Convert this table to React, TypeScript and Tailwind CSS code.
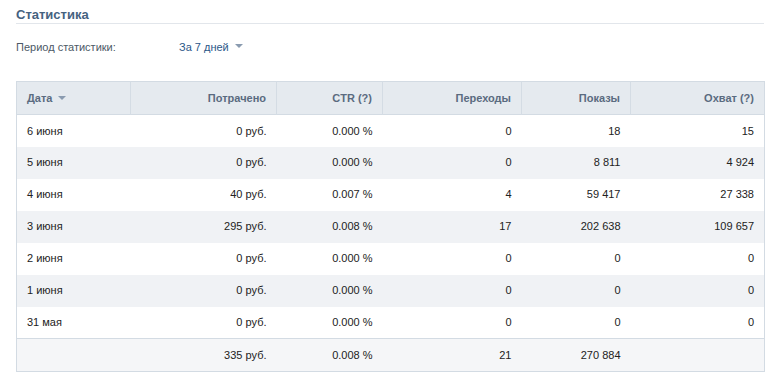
import React from "react";

const rows = [
  ["6 июня", "0 руб.", "0.000 %", "0", "18", "15"],
  ["5 июня", "0 руб.", "0.000 %", "0", "8 811", "4 924"],
  ["4 июня", "40 руб.", "0.007 %", "4", "59 417", "27 338"],
  ["3 июня", "295 руб.", "0.008 %", "17", "202 638", "109 657"],
  ["2 июня", "0 руб.", "0.000 %", "0", "0", "0"],
  ["1 июня", "0 руб.", "0.000 %", "0", "0", "0"],
  ["31 мая", "0 руб.", "0.000 %", "0", "0", "0"],
];

const cols = [
  { label: "Дата", w: "w-[114px]" },
  { label: "Потрачено", w: "w-[146px]" },
  { label: "CTR (?)", w: "w-[106px]" },
  { label: "Переходы", w: "w-[139px]" },
  { label: "Показы", w: "w-[109px]" },
  { label: "Охват (?)", w: "w-[134px]" },
];

function Caret() {
  return (
    <svg width="8" height="4" viewBox="0 0 8 4" className="inline-block ml-[6px] mb-[2px]">
      <path d="M0 0h8L4 4z" fill="#8a9bb0" />
    </svg>
  );
}

export default function App() {
  return (
    <div
      className="w-[778px] h-[389px] bg-white px-4 text-[11px] text-[#222]"
      style={{ fontFamily: '"Liberation Sans", Arial, sans-serif' }}
    >
      {/* Title */}
      <div className="w-[748px] h-[24px] border-b border-[#e2e6eb] pt-[5px]">
        <span className="text-[13px] font-bold text-[#45627f]">Статистика</span>
      </div>

      {/* Period */}
      <div className="flex items-center h-[22px] mt-[12px]">
        <span className="w-[163px] text-[#4c5966]">Период статистики:</span>
        <span className="text-[#2b5788]">За 7 дней</span>
        <Caret />
      </div>

      {/* Table */}
      <table className="mt-[23px] w-[749px] table-fixed border-collapse border border-[#d3dbe3]">
        <thead>
          <tr className="h-[33px] bg-[#e5eaef]">
            {cols.map((c, i) => (
              <th
                key={c.label}
                className={`${c.w} font-bold text-[#5a6b80] px-[10px] ${
                  i === 0 ? "text-left" : "text-right border-l border-[#d4dce4]"
                }`}
              >
                {c.label}
                {i === 0 && <Caret />}
              </th>
            ))}
          </tr>
        </thead>
        <tbody className="border-t border-[#d3dbe3]">
          {rows.map((r, ri) => (
            <tr key={ri} className={`h-[32px] ${ri % 2 === 1 ? "bg-[#f0f2f5]" : "bg-white"}`}>
              {r.map((v, i) => (
                <td key={i} className={`px-[10px] ${i === 0 ? "text-left" : "text-right"}`}>
                  {v}
                </td>
              ))}
            </tr>
          ))}
          <tr className="h-[33px] bg-[#f5f6f8] border-t border-[#d3dbe3]">
            <td />
            <td className="px-[10px] text-right">335 руб.</td>
            <td className="px-[10px] text-right">0.008 %</td>
            <td className="px-[10px] text-right">21</td>
            <td className="px-[10px] text-right">270 884</td>
            <td />
          </tr>
        </tbody>
      </table>
    </div>
  );
}
